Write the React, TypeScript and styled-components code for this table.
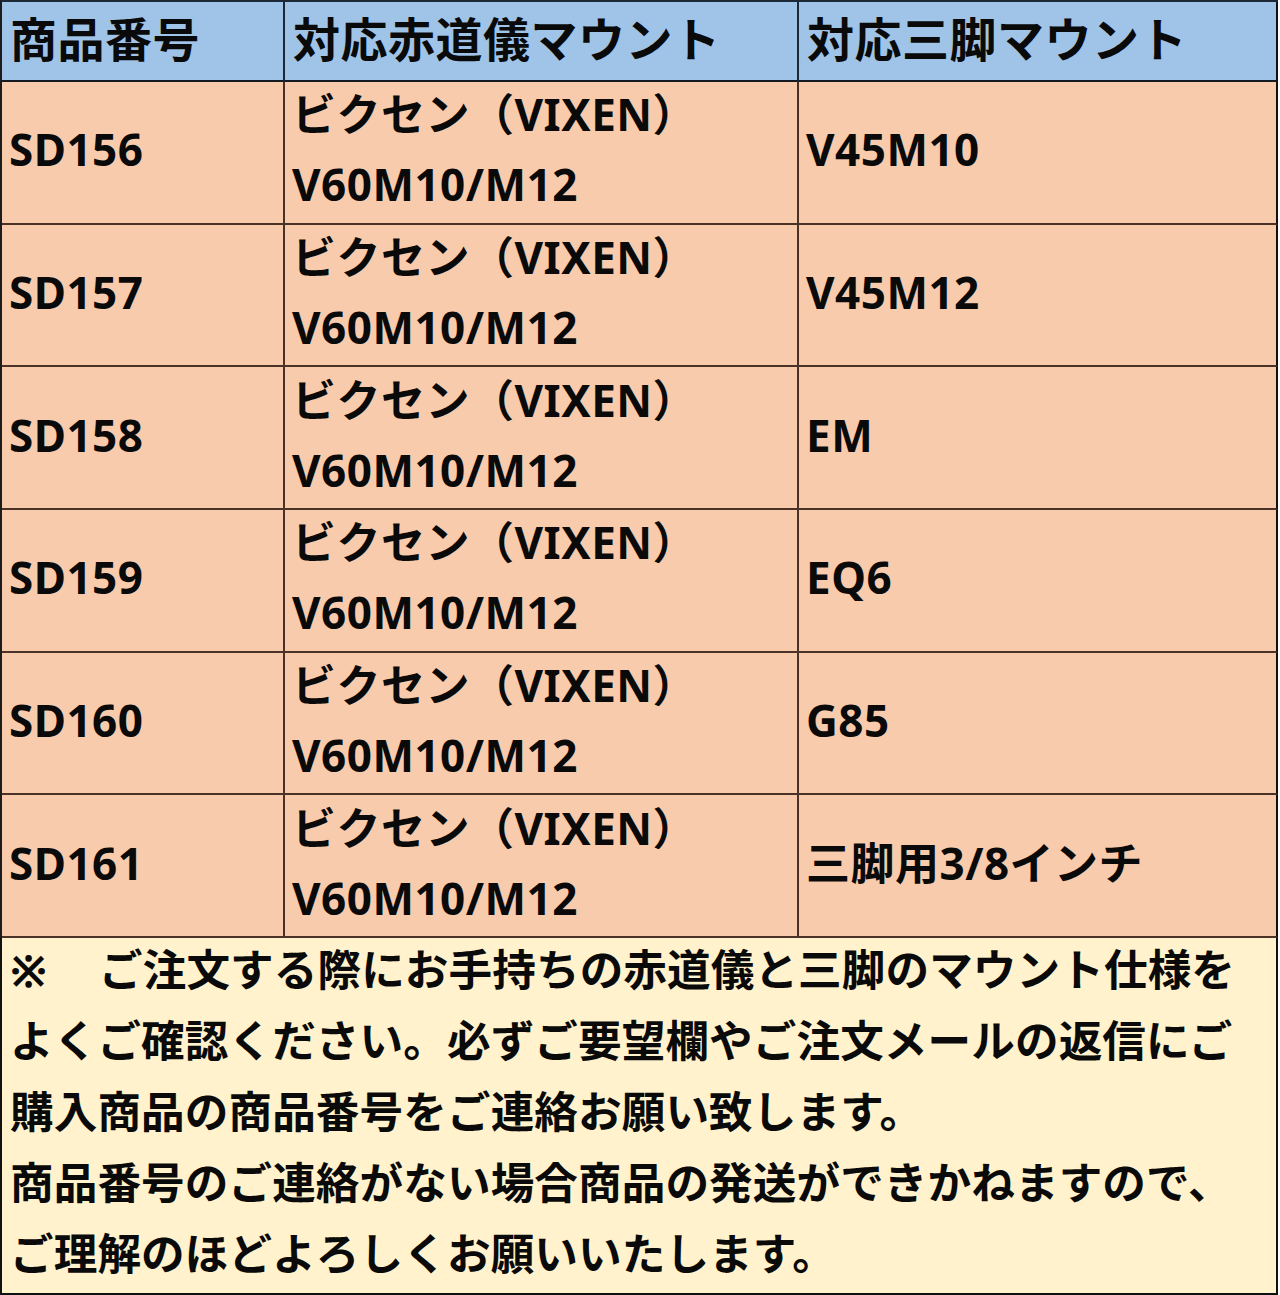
import styled, { createGlobalStyle } from "styled-components";

interface Mount {
  code: string;
  equatorial: string[];
  tripod: string;
}

const mounts: Mount[] = [
  { code: "SD156", equatorial: ["ビクセン（VIXEN）", "V60M10/M12"], tripod: "V45M10" },
  { code: "SD157", equatorial: ["ビクセン（VIXEN）", "V60M10/M12"], tripod: "V45M12" },
  { code: "SD158", equatorial: ["ビクセン（VIXEN）", "V60M10/M12"], tripod: "EM" },
  { code: "SD159", equatorial: ["ビクセン（VIXEN）", "V60M10/M12"], tripod: "EQ6" },
  { code: "SD160", equatorial: ["ビクセン（VIXEN）", "V60M10/M12"], tripod: "G85" },
  { code: "SD161", equatorial: ["ビクセン（VIXEN）", "V60M10/M12"], tripod: "三脚用3/8インチ" },
];

const notes = [
  "ご注文する際にお手持ちの赤道儀と三脚のマウント仕様を",
  "よくご確認ください。必ずご要望欄やご注文メールの返信にご",
  "購入商品の商品番号をご連絡お願い致します。",
  "商品番号のご連絡がない場合商品の発送ができかねますので、",
  "ご理解のほどよろしくお願いいたします。",
];

const App = () => {
  return (
    <>
      <GlobalStyle />
      <StyledSheet>
        <StyledTable>
          <StyledHeadCell>商品番号</StyledHeadCell>
          <StyledHeadCell>対応赤道儀マウント</StyledHeadCell>
          <StyledHeadCell $last>対応三脚マウント</StyledHeadCell>
          {mounts.map((m) => (
            <StyledRow key={m.code}>
              <StyledCell>{m.code}</StyledCell>
              <StyledCell>
                {m.equatorial.map((line) => (
                  <StyledLine key={line}>{line}</StyledLine>
                ))}
              </StyledCell>
              <StyledCell $last>{m.tripod}</StyledCell>
            </StyledRow>
          ))}
        </StyledTable>
        <StyledNotes>
          {notes.map((line, i) => (
            <StyledNoteLine key={line}>
              {i === 0 && <StyledMark>※</StyledMark>}
              {line}
            </StyledNoteLine>
          ))}
        </StyledNotes>
      </StyledSheet>
    </>
  );
};

export default App;

// ========== Start styled-components =========
const GlobalStyle = createGlobalStyle`
  body {
    margin: 0;
    background: #ffffff;
    font-family: "Noto Sans", "Noto Sans CJK JP", sans-serif;
    color: #0a0a0a;
  }
`;
const StyledSheet = styled.div`
  width: 1278px;
  box-sizing: border-box;
  font-weight: 700;
`;
const StyledTable = styled.div`
  display: grid;
  grid-template-columns: 283px 514px 479px;
  border-left: 2px solid #1c1c1c;
  border-top: 2px solid #1d2836;
`;
const StyledHeadCell = styled.div<{ $last?: boolean }>`
  box-sizing: border-box;
  height: 80px;
  display: flex;
  align-items: center;
  padding: 0 0 10px 8px;
  background: #9fc4e8;
  border-right: 2px solid ${({ $last }) => ($last ? "#111" : "#1d2836")};
  border-bottom: 2px solid #141a22;
  font-size: 47px;
  letter-spacing: 0.5px;
`;
const StyledRow = styled.div`
  display: contents;
`;
const StyledCell = styled.div<{ $last?: boolean }>`
  box-sizing: border-box;
  height: 142.67px;
  display: flex;
  flex-direction: column;
  justify-content: center;
  padding: 0 0 6px 7px;
  background: #f8cbad;
  border-right: 2px solid ${({ $last }) => ($last ? "#111" : "#4a3226")};
  border-bottom: 2px solid #4a3226;
  font-size: 44px;
  line-height: 70px;
  letter-spacing: 0.5px;
`;
const StyledLine = styled.span`
  display: block;
  white-space: nowrap;
`;
const StyledNotes = styled.div`
  box-sizing: border-box;
  background: #fff2cc;
  border-left: 2px solid #111;
  border-right: 2px solid #111;
  border-bottom: 3px solid #111;
  padding: 0 10px 0 8px;
  font-size: 43.6px;
  letter-spacing: 0.1px;
`;
const StyledNoteLine = styled.div`
  height: 71px;
  line-height: 62px;
  white-space: nowrap;
`;
const StyledMark = styled.span`
  display: inline-block;
  width: 89px;
`;
// ========== End styled-components =========
